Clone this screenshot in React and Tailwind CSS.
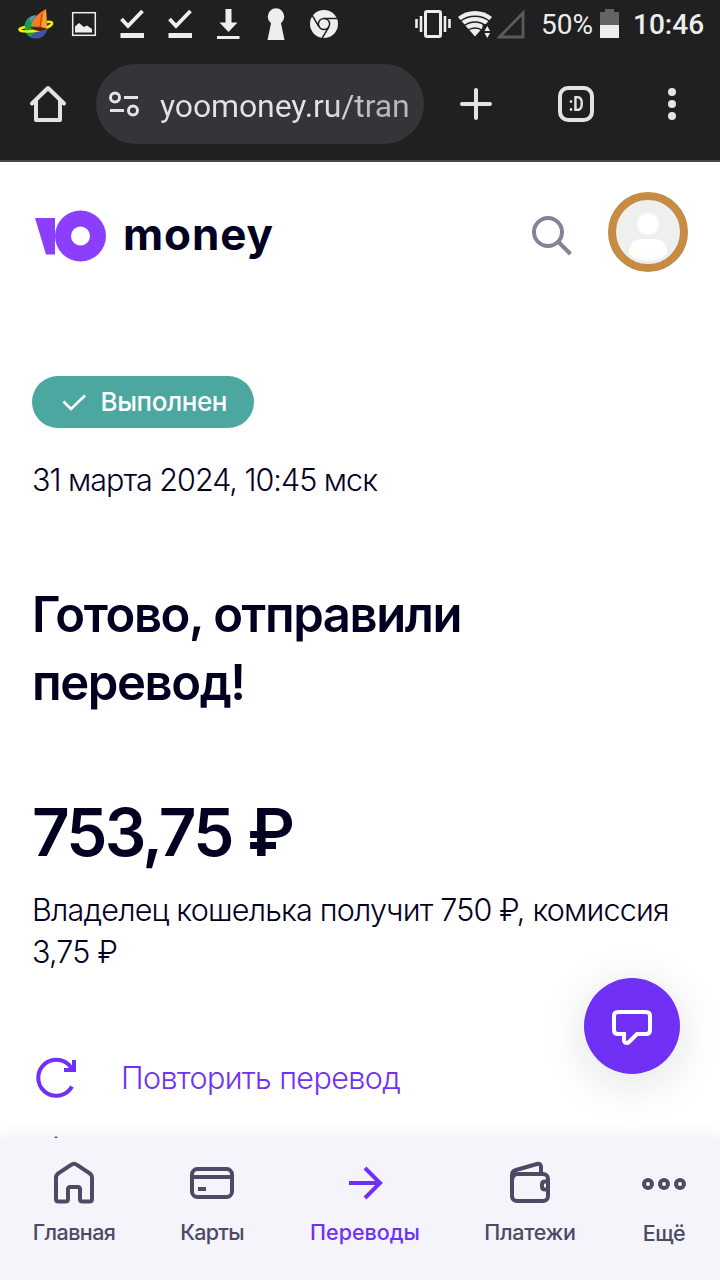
import React from "react";

function StatusBar() {
  return (
    <div className="flex h-[50px] shrink-0 items-center bg-[#202020] pl-3 font-['Roboto',sans-serif] text-[#eeeeee]">
      <svg className="h-[50px] w-12 shrink-0" viewBox="12 0 48 50">
        <circle cx="36" cy="27" r="11.5" fill="#4054a4" />
        <path d="M36 15.500c-7 0-11.500 5-11.500 11.500 0 5 3 8.500 6 10 4-3 5-8 5-12z" fill="#16a04a" />
        <path d="M29 18c2-2 4-2.500 7-2.500l-5 7z" fill="#5d8fc4" />
        <path d="M25 27c-4 1-6 2-5.500 3 1 2 12 2 20 0s13-5 12.500-7c-.3-1-2-1.500-5-1" fill="none" stroke="#f5ea14" strokeWidth="2.600" />
        <path d="M46 9l1 18.500-16-1.500c1-6 7-13 15-17z" fill="#ff7a1a" />
        <path d="M46 9l1 18.500-5-.5 1-12z" fill="#f5a030" />
        <path d="M42 14l-2 13" stroke="#7a3a10" strokeWidth="0.800" />
        <path d="M30 27l17 1c-2 4-12 4-17-1z" fill="#5b1a10" />
      </svg>
      <svg className="h-[50px] w-12 shrink-0" viewBox="60 0 48 50">
        <rect x="72.700" y="12.700" width="22.600" height="22.600" fill="none" stroke="#eeeeee" strokeWidth="1.500" />
        <path d="M75 32.500v-6l4-3.500 5 4 3-1.500 5 3.500v3.500z" fill="#eeeeee" />
      </svg>
      {[0, 1].map((i) => (
        <svg key={i} className="h-[50px] w-12 shrink-0" viewBox="108 0 48 50">
          <path d="M121.500 19l6.500 7 14.500-15" fill="none" stroke="#eeeeee" strokeWidth="3.800" />
          <rect x="120.500" y="33" width="23.500" height="5" fill="#eeeeee" />
        </svg>
      ))}
      <svg className="h-[50px] w-12 shrink-0" viewBox="204 0 48 50">
        <path d="M225.500 9h6v13.500h6l-9 9.500-9-9.500h6z" fill="#eeeeee" />
        <rect x="217" y="36" width="22.500" height="3" fill="#eeeeee" />
      </svg>
      <svg className="h-[50px] w-12 shrink-0" viewBox="252 0 48 50">
        <circle cx="276" cy="16.500" r="8.200" fill="#eeeeee" />
        <path d="M271.500 21h9l4 19h-17z" fill="#eeeeee" />
      </svg>
      <svg className="h-[50px] w-12 shrink-0" viewBox="300 0 48 50">
        <circle cx="324" cy="24" r="14" fill="#eeeeee" />
        <g fill="none" stroke="#202020" strokeWidth="1.500">
          <circle cx="324" cy="24" r="5.600" />
          <path d="M324 18.400h13.500M319 26.800l-6.800-11.500M328.900 26.800l-6.900 11.500" />
        </g>
      </svg>
      <div className="grow" />
      <svg className="h-[50px] w-[115px] shrink-0" viewBox="414 0 115 50">
        <rect x="425.500" y="11.500" width="15" height="25" rx="1.500" fill="none" stroke="#eeeeee" strokeWidth="3" />
        <path d="M416.500 19v9M421 16v16M445 16v16M449.500 19v9" stroke="#eeeeee" strokeWidth="2.600" />
        <path d="M475 36.500L458 17c9-8 25-8 34 0z" fill="#eeeeee" />
        <path d="M460 21.500c9-7 21-7 30 0M463.500 26c7-5.500 16-5.500 23 0M467.500 30.500c4.500-3.500 10.500-3.500 15 0" fill="none" stroke="#202020" strokeWidth="1.500" />
        <path d="M482.500 24h10v15h-10z" fill="#202020" />
        <path d="M484.500 31l2.800-5 2.800 5zM484.500 33l2.800 5 2.800-5z" fill="#eeeeee" />
        <path d="M499.500 37L523 13v24z" fill="none" stroke="#5a5a5a" strokeWidth="2.800" />
      </svg>
      <span className="ml-3 w-[53px] shrink-0 whitespace-nowrap text-[28px] leading-none">50%</span>
      <svg className="ml-1.5 h-[50px] w-5 shrink-0" viewBox="600 0 20 50">
        <path d="M600 12h5V9h9v3h5v13h-19z" fill="#646464" />
        <rect x="600" y="25" width="19" height="13" fill="#eeeeee" />
      </svg>
      <span className="ml-[13px] w-[87px] shrink-0 whitespace-nowrap text-[28px] font-medium leading-none">10:46</span>
    </div>
  );
}

function BrowserBar() {
  return (
    <div className="flex h-[112px] shrink-0 items-start border-b-2 border-[#484848] bg-[#202020] pt-[14px]">
      <svg className="h-20 w-24 shrink-0" viewBox="0 64 96 80" fill="none" stroke="#e3e3e3" strokeWidth="4" strokeLinecap="round" strokeLinejoin="round">
        <path d="M36 101v19h24v-19M32 103.500L48 88l16 15.500" />
      </svg>
      <div className="flex h-20 w-[328px] items-center rounded-full bg-[#343539]">
        <svg className="h-20 w-16 shrink-0" viewBox="96 64 64 80" fill="none" stroke="#e3e3e3" strokeWidth="3">
          <circle cx="115" cy="97.500" r="4.500" />
          <circle cx="133" cy="110.500" r="4.500" />
          <path d="M124 97.500h14M110 110.500h14" />
        </svg>
        <span className="mt-[3px] whitespace-nowrap bg-gradient-to-r from-[#e3e3e3] from-65% to-[#b8b8ba] to-85% bg-clip-text font-['Roboto',sans-serif] text-[32px] leading-[40px] tracking-[-0.12px] text-transparent">
          yoomoney.ru/tran
        </span>
      </div>
      <svg className="h-20 w-[104px] shrink-0" viewBox="424 64 104 80" stroke="#e3e3e3" strokeWidth="4" strokeLinecap="round">
        <path d="M462 104h28M476 90v28" />
      </svg>
      <div className="flex h-20 w-24 items-center justify-center">
        <div className="flex h-9 w-9 items-center justify-center rounded-[10px] border-4 border-[#e3e3e3] font-['Roboto',sans-serif] text-[20px] font-bold leading-none text-[#e3e3e3]">
          <span className="scale-x-[0.8]">:D</span>
        </div>
      </div>
      <svg className="h-20 w-24 shrink-0" viewBox="624 64 96 80" fill="#e3e3e3">
        <circle cx="672" cy="92" r="4" />
        <circle cx="672" cy="104" r="4" />
        <circle cx="672" cy="116" r="4" />
      </svg>
    </div>
  );
}

function Header() {
  return (
    <header className="flex h-[140px] shrink-0 items-center">
      <svg className="h-[140px] w-[120px] shrink-0" viewBox="0 162 120 140" fill="#8b3ffd">
        <path d="M35 218h20v36.500h-9z" />
        <path fillRule="evenodd" d="M80.500 210.500a25.500 25.500 0 1 1 0 51a25.500 25.500 0 1 1 0-51zM80.500 226.500a9.500 9.500 0 1 0 0 19a9.500 9.500 0 1 0 0-19z" />
      </svg>
      <span className="w-[160px] pl-[3px] pt-1 text-[44px] font-bold leading-[60px] tracking-[0.9px]">money</span>
      <div className="grow" />
      <svg className="h-[140px] w-[60px] shrink-0" viewBox="520 162 60 140" fill="none" stroke="#848398" strokeWidth="4">
        <circle cx="548" cy="232" r="14" />
        <path d="M558 241.500L570.500 254" />
      </svg>
      <svg className="ml-7 mr-8 h-[140px] w-20 shrink-0" viewBox="608 162 80 140">
        <circle cx="648" cy="232" r="36" fill="#efefef" stroke="#c68c46" strokeWidth="8" />
        <circle cx="648" cy="224" r="11" fill="#fff" />
        <path d="M629 254v-3c0-7 6-12 12-12h14c6 0 12 5 12 12v3c-11 9-27 9-38 0z" fill="#fff" />
      </svg>
    </header>
  );
}

function TabItem({ label, width, active, children, tracking, shift }) {
  return (
    <a className={`flex shrink-0 flex-col items-center ${width} ${active ? "text-[#7030f6]" : "text-[#4c4a64]"}`}>
      <svg className="h-12 w-12" viewBox="-24 -24 48 48" fill="none" stroke="currentColor" strokeWidth="4">
        {children}
      </svg>
      <span className={`whitespace-nowrap text-[21.5px] font-medium leading-[28px] ${shift} ${tracking}`}>{label}</span>
    </a>
  );
}

function TabBar() {
  return (
    <nav className="relative flex h-[142px] shrink-0 items-start rounded-t bg-[#f5f4fa] pt-[21px] shadow-[0_-4px_16px_rgba(0,0,0,0.06)]">
      <TabItem label="Главная" width="w-[148px]" tracking="tracking-[-0.6px]" shift="mt-[11px]">
        <path d="M-18-5.500c0-2 1-3 2-4L-3-18c2-1.600 4-1.600 6 0L16-9.500c1 1 2 2 2 4V16c0 1.500-1 2.500-2.500 2.500h-7C7 18.500 6 17.500 6 16V6c0-1-.8-2-2-2h-8c-1.200 0-2 1-2 2v10c0 1.500-1 2.500-2.500 2.500h-7C-17 18.500-18 17.500-18 16z" />
      </TabItem>
      <TabItem label="Карты" width="w-[128px]" tracking="tracking-[-0.7px]" shift="mt-[11px]">
        <rect x="-20" y="-14" width="40" height="28" rx="5.500" />
        <path d="M-20-6h40M-14 6h8" />
      </TabItem>
      <TabItem label="Переводы" width="w-[178px]" active tracking="tracking-[0px]" shift="mt-[11px]">
        <path d="M-16 0H14M0-15L15 0L0 15" />
      </TabItem>
      <TabItem label="Платежи" width="w-[152px]" tracking="tracking-[-0.3px]" shift="mt-[11px]">
        <path d="M-18 13V-8c0-3 2-4.500 4-5L7-19c2.500-.7 4 .6 4 3v5M-18-2c0-4 2-7 6-7H13c3 0 5 2 5 5V13c0 3-2 5-5 5H-13c-3 0-5-2-5-5zM18-1.500H15c-2 0-3 1-3 3v2c0 2 1 3 3 3h3" />
      </TabItem>
      <TabItem label="Ещё" width="w-[116px]" tracking="tracking-[-0.4px]" shift="mt-[12px]">
        <circle cx="-16" cy="1" r="4" />
        <circle cx="0" cy="1" r="4" />
        <circle cx="16" cy="1" r="4" />
      </TabItem>
    </nav>
  );
}

export default function App() {
  return (
    <div className="relative flex h-[1280px] w-[720px] flex-col overflow-hidden bg-white font-['Inter',sans-serif] text-[#020021]">
      <StatusBar />
      <BrowserBar />
      <Header />
      <main className="flex min-h-0 shrink grow basis-0 flex-col items-start px-8 pt-[74px]">
        <div className="flex h-[52px] w-[222px] shrink-0 items-center rounded-full bg-[#4ba7a0] pl-7 text-white">
          <svg className="h-7 w-7 shrink-0" viewBox="60 388 28 28" fill="none" stroke="currentColor" strokeWidth="2.600">
            <path d="M63.500 401.500l7.500 7.500L85 395.500" />
          </svg>
          <span className="ml-[12.5px] whitespace-nowrap text-[26px] font-medium leading-[52px] tracking-[-0.4px]">Выполнен</span>
        </div>
        <p className="mt-8 shrink-0 whitespace-nowrap text-[30.5px] font-light leading-[40px] tracking-[-1px]">31 марта 2024, 10:45 мск</p>
        <h1 className="mt-[81px] shrink-0 text-[49px] font-semibold leading-[68px] tracking-[-1.4px]">
          Готово, отправили
          <br />
          перевод!
        </h1>
        <p className="mt-[70px] shrink-0 whitespace-nowrap text-[65.5px] font-semibold leading-[92px] tracking-[-2.8px] [word-spacing:2px]">753,75 ₽</p>
        <p className="mt-[10px] shrink-0 whitespace-nowrap text-[30.5px] font-light leading-[42px] tracking-[-0.8px]">
          Владелец кошелька получит 750 ₽, комиссия
          <br />
          3,75 ₽
        </p>
        <div className="mt-[81px] flex h-12 shrink-0 items-center text-[#7030f6]">
          <svg className="h-12 w-12 shrink-0" viewBox="32 1054 48 48" fill="none" stroke="currentColor" strokeWidth="4">
            <path d="M72 1086.500A18 18 0 1 1 72 1069M74 1060v10H64" />
          </svg>
          <span className="ml-[41px] whitespace-nowrap text-[30.5px] font-light leading-[42px] tracking-[-0.6px]">Повторить перевод</span>
        </div>
        <svg className="mt-[34px] h-2 w-12 shrink-0" viewBox="32 1136 48 8">
          <path d="M54 1138l2-2 2 2v6h-4z" fill="#7030f6" />
        </svg>
      </main>
      <button className="absolute right-10 top-[978px] flex h-24 w-24 items-center justify-center rounded-full bg-[#7030f6] shadow-[0_8px_48px_rgba(0,20,40,0.13)]">
        <svg className="h-12 w-12" viewBox="608 1002 48 48" fill="none" stroke="#fff" strokeWidth="4">
          <path d="M618 1012h28c2.500 0 4 1.500 4 4v14c0 2.500-1.500 4-4 4h-9l-8 8c-1.500 1.500-5 1.500-5-2v-6h-6c-2.500 0-4-1.500-4-4v-14c0-2.500 1.500-4 4-4z" />
        </svg>
      </button>
      <TabBar />
    </div>
  );
}
